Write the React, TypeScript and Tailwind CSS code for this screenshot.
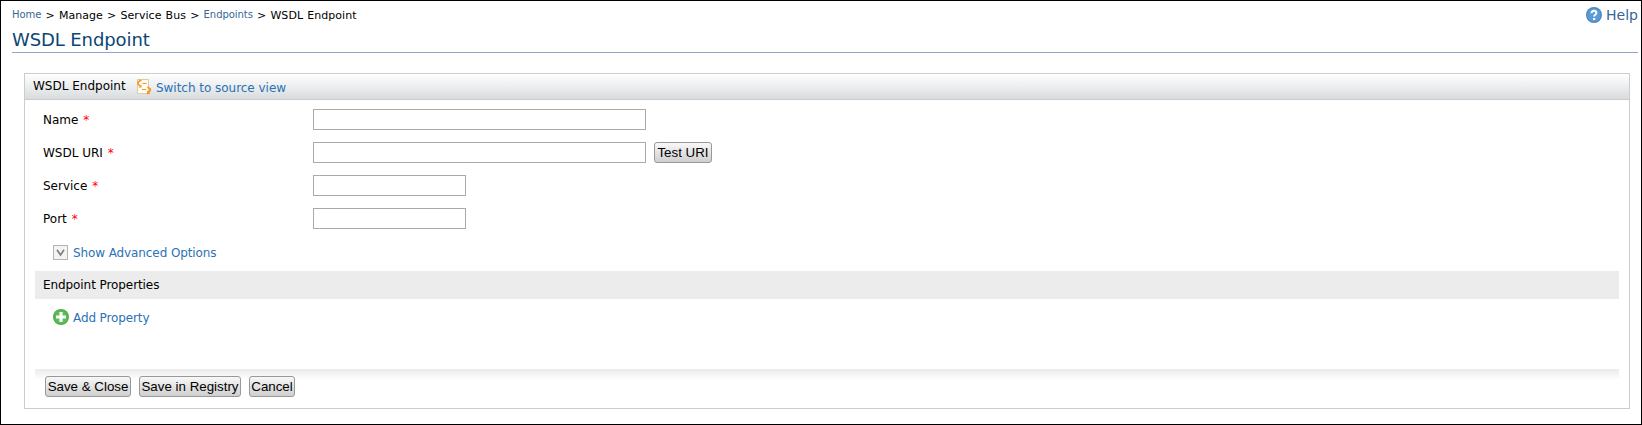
import type { ReactNode } from "react";

function Crumb({ children }: { children: ReactNode }) {
  return (
    <a href="#" className="relative -top-px text-[10px] tracking-[-0.05px] text-[#386698]">
      {children}
    </a>
  );
}

function SwitchIcon() {
  return (
    <svg className="mt-[5px] h-4 w-4 shrink-0" viewBox="0 0 16 16" fill="none">
      <path d="M1.5 0.5H12.5V14.5H1.5Z" fill="#fffaf2" stroke="#dccba6" />
      <path d="M5.5 1.5H4L2 3.5V5L4 7" stroke="#f7941d" strokeWidth="1.7" />
      <path d="M2.5 8.5H5.5V5.5Z" fill="#f7941d" />
      <path d="M6.5 4.5H10.5M6 10.5H10" stroke="#f7941d" strokeWidth="1" />
      <path d="M11.5 8L14.2 10.2V11.5L12.5 13" stroke="#f7941d" strokeWidth="1.7" />
      <path d="M11 11.5V15.5L14.5 14.5Z" fill="#f7941d" />
    </svg>
  );
}

function HelpIcon() {
  return (
    <svg className="h-4 w-4" viewBox="0 0 16 16">
      <circle cx="8" cy="8" r="8" fill="#4a86c5" />
      <circle cx="8" cy="8" r="6.8" fill="#5b9bd5" />
      <path d="M5.6 6.3C5.6 3.1 10.4 3.1 10.4 6C10.4 7.8 8.1 7.8 8.1 9.6" fill="none" stroke="#fff" strokeWidth="2" />
      <rect x="7" y="11" width="2.2" height="2" fill="#fff" />
    </svg>
  );
}

function ExpandIcon() {
  return (
    <svg className="h-[15px] w-[15px]" viewBox="0 0 15 15">
      <rect x="0.5" y="0.5" width="14" height="14" fill="#f4f4f4" stroke="#b4b4b4" />
      <path d="M4 4.8L7.5 10L11 4.8" fill="none" stroke="#808080" strokeWidth="1.7" />
    </svg>
  );
}

function AddIcon() {
  return (
    <svg className="h-4 w-4" viewBox="0 0 16 16">
      <circle cx="8" cy="8" r="8" fill="#4cae48" />
      <circle cx="8" cy="8" r="6.8" fill="#5bbb54" />
      <path d="M8 3V13M3 8H13" stroke="#fff" strokeWidth="3.2" />
    </svg>
  );
}

function Button({ children, width }: { children: ReactNode; width: string }) {
  return (
    <button
      className={`flex h-[21px] shrink-0 items-center justify-center rounded-[3px] border border-[#999] bg-linear-to-b from-[#f8f8f8] to-[#cfcfcf] font-['Liberation_Sans',Arial,sans-serif] text-[13.33px] leading-[19px] whitespace-nowrap text-black ${width}`}
    >
      {children}
    </button>
  );
}

function Field({ label, width, children }: { label: string; width: string; children?: ReactNode }) {
  return (
    <div className="flex h-[33px] items-start">
      <label className="w-[270px] pt-[3px] leading-4">
        {label} <span className="ml-px text-[#f00]">*</span>
      </label>
      <input type="text" aria-label={label} className={`mr-2 h-[21px] border border-[#aaa] bg-white px-1 outline-none ${width}`} />
      {children}
    </div>
  );
}

export default function App() {
  return (
    <div className="h-[425px] w-[1642px] overflow-hidden border border-black bg-white font-['DejaVu_Sans',Verdana,sans-serif] text-xs text-black">
      <header className="ml-[11px] mr-[3px] h-[52px] border-b border-[#8fa5cb]">
        <div className="flex h-7 items-start justify-between">
          <nav className="pt-[7px] text-[11px] leading-4 tracking-[0.05px] [word-spacing:0.6px] whitespace-pre">
            <Crumb>Home</Crumb>{" > Manage > Service Bus > "}<Crumb>Endpoints</Crumb>{" > WSDL Endpoint"}
          </nav>
          <a href="#" className="flex items-center gap-1 pt-[6px] text-sm leading-4 text-[#386698]">
            <HelpIcon />
            Help
          </a>
        </div>
        <h1 className="text-[18px] leading-[22px] tracking-[-0.1px] text-[#0b4676]">WSDL Endpoint</h1>
      </header>

      <main className="ml-[23px] mr-[11px] mt-5 h-[336px] border border-[#ccc]">
        <div className="flex h-[26px] items-start border-b border-[#ccc] bg-linear-to-b from-white to-[#d9dcde] pl-2">
          <h2 className="w-[103px] pt-1 leading-4 whitespace-nowrap">WSDL Endpoint</h2>
          <SwitchIcon />
          <a href="#" className="ml-1 pt-[6px] leading-4 tracking-[-0.03px] whitespace-nowrap text-[#2a72b5]">Switch to source view</a>
        </div>

        <form className="mx-[10px]" onSubmit={(event) => event.preventDefault()}>
          <div className="pl-2 pt-[9px]">
            <Field label="Name" width="w-[333px]" />
            <Field label="WSDL URI" width="w-[333px]">
              <Button width="w-[58px]">Test URI</Button>
            </Field>
            <Field label="Service" width="w-[153px]" />
            <Field label="Port" width="w-[153px]" />
          </div>
          <a href="#" className="ml-[18px] flex h-[30px] items-start gap-[5px] pt-1 leading-4 tracking-[-0.1px] text-[#2a72b5]">
            <ExpandIcon />
            Show Advanced Options
          </a>
          <h3 className="h-7 bg-[#ececec] pl-2 pt-[6px] leading-4 tracking-[-0.08px]">Endpoint Properties</h3>
          <a href="#" className="ml-[18px] flex h-[70px] items-start gap-1 pt-[10px] leading-[18px] tracking-[-0.12px] text-[#2a72b5]">
            <AddIcon />
            Add Property
          </a>
          <div className="flex h-9 gap-2 bg-linear-to-b from-[#ebebeb] to-white to-[11px] pl-[10px] pt-[7px]">
            <Button width="w-[86px]">Save &amp; Close</Button>
            <Button width="w-[102px]">Save in Registry</Button>
            <Button width="w-[46px]">Cancel</Button>
          </div>
        </form>
      </main>
    </div>
  );
}
